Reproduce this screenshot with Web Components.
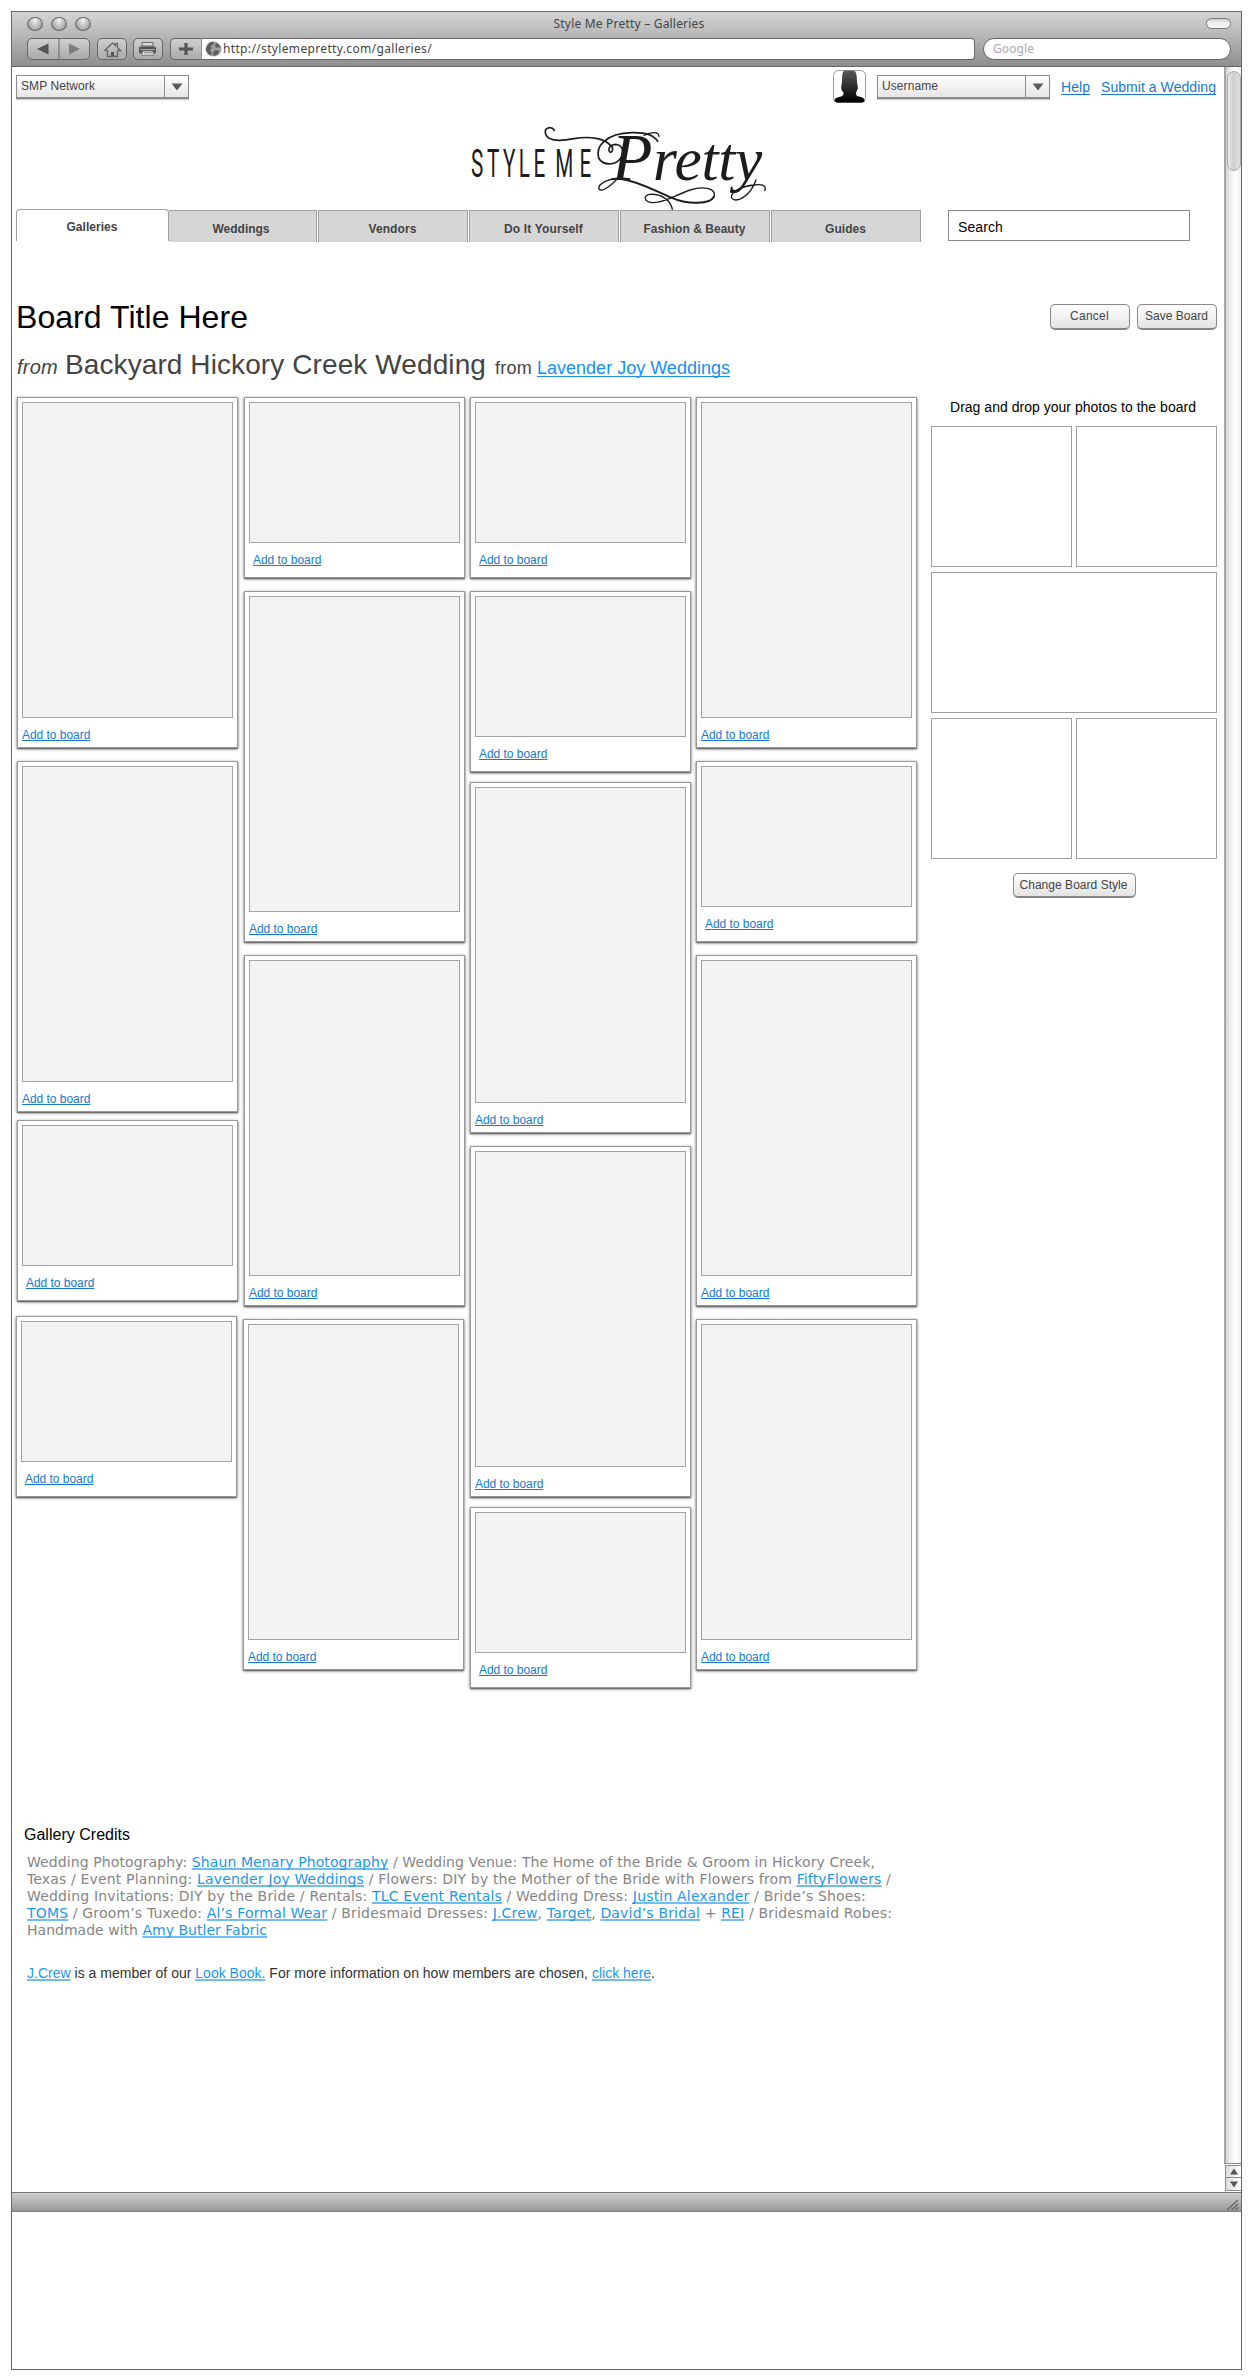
<!DOCTYPE html>
<html lang="en">
<head>
<meta charset="utf-8">
<title>Style Me Pretty – Galleries</title>
<style>
html,body{margin:0;background:#fff}
body{font-family:"Liberation Sans",Arial,sans-serif;padding:11px 0 10px 11px;height:2359px}
</style>
</head>
<body>
<browser-window></browser-window>
<script>
function define(name, html, setup) {
  customElements.define(name, class extends HTMLElement {
    connectedCallback() {
      if (this.shadowRoot) return;
      const root = this.attachShadow({ mode: 'open' });
      root.innerHTML = html;
      if (setup) setup(this, root);
    }
  });
}

// Single line of text spaced to a given width.
define('fit-text', `<style>:host{display:inline-block;white-space:nowrap}</style><slot></slot>`, host => {
  const w = parseFloat(host.getAttribute('w'));
  const n = host.textContent.length;
  const natural = host.getBoundingClientRect().width;
  if (n && natural) host.style.letterSpacing = ((w - natural) / n).toFixed(4) + 'px';
});

define('text-link', `<style>
:host{color:#1679cf}
a{color:inherit;text-decoration:underline;text-underline-offset:var(--offset,1px);text-decoration-skip-ink:none;text-decoration-color:var(--line,currentColor);text-decoration-thickness:var(--thick,1px)}
</style><a><slot></slot></a>`);

define('select-box', `<style>
:host{display:flex;box-sizing:border-box;width:173px;height:24px;border:1px solid #8c8c8c;border-bottom:2px solid #8a8a8a;background:linear-gradient(#fff,#e6e6e6);font-size:12px;line-height:14px;color:#444;box-shadow:0 1px 1px rgba(0,0,0,.2)}
.t{flex:1;padding:3px 0 0 4px}
.a{width:23px;border-left:1px solid #8c8c8c;display:flex;justify-content:center;padding-top:7px;box-sizing:content-box}
svg{display:block}
</style><div class="t"><slot></slot></div><div class="a"><svg width="12" height="8"><path d="M.5.5h11L6 7.500z" fill="#5b5b5b"/></svg></div>`);

define('push-button', `<style>
:host{display:block;box-sizing:border-box;width:80px;height:26px;border:1px solid #8a8a8a;border-bottom:2px solid #858585;border-radius:5px;background:linear-gradient(#fff,#e3e3e3);font-size:12px;line-height:14px;color:#444;text-align:center;padding:4px 1px 0 0}
</style><slot></slot>`);

define('nav-tab', `<style>
:host{display:block;box-sizing:border-box;width:150px;height:32px;margin-top:1px;margin-right:1px;border:1px solid #a0a0a0;border-bottom:0;background:#d6d6d6;font-size:12px;line-height:14px;font-weight:bold;color:#444;text-align:center;padding:11px 1px 0 0}
:host([active]){width:153px;height:32px;margin:0;border-radius:4px 4px 0 0;background:#fff;padding-top:10px;padding-right:1px}
:host([first]){width:148px;border-left:0;padding-right:3px}
</style><slot></slot>`);

define('photo-card', `<style>
:host{display:block;box-sizing:border-box;width:221px;height:351px;border:1px solid #999;background:#fff;padding:4px;box-shadow:0 1px 3px rgba(0,0,0,.55),0 1px 1px rgba(0,0,0,.35);font-size:12px;line-height:14px}
.p{box-sizing:border-box;height:316px;border:1px solid #a3a3a3;background:#f3f3f3}
.l{margin:10px 0 0 0}
:host([short]){height:181px}
:host([short]) .p{height:141px}
:host([short]) .l{margin:10px 0 0 4px}
</style><div class="p"></div><div class="l"><fit-text w="68.3"><text-link>Add to board</text-link></fit-text></div>`);

define('photo-column', `<style>:host{display:block}</style><slot></slot>`, host => {
  // layout: "<kind><gap above>[<]" where "<" nudges the card one pixel left
  for (const item of host.getAttribute('cards').split(' ')) {
    const card = document.createElement('photo-card');
    if (item[0] === 's') card.setAttribute('short', '');
    card.style.marginTop = parseInt(item.slice(1), 10) + 'px';
    if (item.endsWith('<')) card.style.marginLeft = '-1px';
    host.append(card);
  }
});

define('drop-board', `<style>
:host{display:block;width:286px;font-size:14px;line-height:16px;color:#000}
.h{text-align:center;padding:2px 2px 11px 0;}
.g{display:grid;grid-template-columns:141px 141px;column-gap:4px;row-gap:5px}
.g div{box-sizing:border-box;height:141px;border:1px solid #a0a0a0}
.w{grid-column:1/3}
push-button{width:123px;height:25px;margin:14px auto 0}
</style><div class="h"><fit-text w="246">Drag and drop your photos to the board</fit-text></div>
<div class="g"><div></div><div></div><div class="w"></div><div></div><div></div></div>
<push-button><fit-text w="108">Change Board Style</fit-text></push-button>`);

define('brand-logo', `<style>:host{display:block;width:300px;height:88px}svg{display:block;overflow:visible}</style>
<svg width="300" height="88" viewBox="150 366 900 264" fill="none" stroke="#1c1c1c" stroke-linecap="round">
<g transform="scale(.54 1)" font-family="Roboto,sans-serif" font-size="115" fill="#1c1c1c" stroke="none"><text x="284" y="532" textLength="412" lengthAdjust="spacing">STYLE</text><text x="752" y="532" textLength="200" lengthAdjust="spacing">ME</text></g>
<text x="575" y="540" font-family="Liberation Serif,serif" font-style="italic" fill="#1c1c1c" stroke="none" font-size="200">P</text><text x="699" y="540" font-family="Liberation Serif,serif" font-style="italic" fill="#1c1c1c" stroke="none" font-size="184" textLength="328" lengthAdjust="spacing">retty</text>
<path stroke-width="5" d="M403 391C393 377 371 383 377 402C383 428 430 422 462 416C508 408 556 414 575 440"/>
<path stroke-width="5" d="M575 436C580 446 578 456 572 457C563 456 564 434 586 433C608 434 613 455 603 473C588 498 548 497 536 474C526 440 556 400 636 398C668 397 700 402 713 424"/>
<path stroke-width="4" d="M672 406C692 397 716 393 717 409"/>
<path stroke-width="4" d="M604 538C575 531 532 550 537 567C546 580 580 552 606 520"/>
<path stroke-width="6" d="M600 536C660 544 710 576 752 592C806 616 870 612 882 590"/>
<path stroke-width="4" d="M882 590C891 560 842 560 810 570C765 586 733 609 700 608C671 607 668 585 690 583C720 581 752 598 757 628"/>
<path stroke-width="4" d="M1008 540C990 592 945 611 935 594C929 574 970 558 1002 555C1026 551 1041 557 1034 572"/>
</svg>`);

define('user-avatar', `<style>:host{display:block;width:33px;height:33px}svg{display:block}</style>
<svg width="33" height="33" viewBox="0 0 33 33"><defs><linearGradient id="g" x1="0" y1="0" x2="0" y2="1"><stop offset="0" stop-color="#5a5a5a"/><stop offset=".75" stop-color="#151515"/><stop offset="1"/></linearGradient></defs>
<rect x=".5" y=".5" width="32" height="32" rx="5" fill="#fff" stroke="#999"/>
<path d="M10.500 1.200C13 .3 20 .3 22 1.200C24.500 4 23.500 11 24.500 15C25.500 18 24.500 20 23 22.500C22.500 26 25 26.500 28 27C31 27.800 32 30 31.500 31.500L29.500 32.500H4L1.500 31.500C1 29.500 2.500 27.800 5 27.200C8.500 26.500 11 26 10.500 22.500C8.500 20.500 7.500 18 8.500 15C9.500 11 8.500 4 10.500 1.200Z" fill="url(#g)"/></svg>`);

define('browser-chrome', `<style>
:host{display:block;box-sizing:border-box;height:55px;border-bottom:1px solid #666;background:linear-gradient(#d5d5d5,#8f8f8f);font-family:"Noto Sans","Open Sans",sans-serif;font-size:12px;color:#444}
.top{display:flex;height:26px;padding:0 10px 0 15px;box-sizing:border-box;justify-content:space-between}
.lights{display:flex;gap:8px;padding-top:5px;width:200px;box-sizing:border-box}
.lights i{box-sizing:border-box;width:16px;height:14px;border:1px solid #686868;border-radius:50%;background:radial-gradient(ellipse at 50% 15%,#f3f3f3 0,#c8c8c8 42%,#858585 100%)}
.title{line-height:16px;padding-top:4px}
.pillbox{width:200px;display:flex;justify-content:flex-end;padding-top:6px;box-sizing:border-box}
.pill{box-sizing:border-box;width:25px;height:11px;border:1px solid #777;border-radius:6px;background:linear-gradient(#ccc,#eee 40%,#f5f5f5)}
.bar{display:flex;height:22px;padding-left:15px}
.b{box-sizing:border-box;height:22px;border:1px solid #666;border-radius:5px;background:linear-gradient(#cfcfcf,#aaa);display:flex}
.b svg{display:block;width:100%;height:20px}
.f{box-sizing:border-box;height:22px;border:1px solid #666;background:#fff;line-height:20px}
.url{display:flex;width:774px;border-left:1px solid #8a8a8a;border-radius:0 4px 4px 0;}
.url svg{margin:2px 1px 0 3px;display:block}
.goog{margin-left:8px;width:248px;border-radius:11px;padding-left:9px;color:#aaa}
</style>
<div class="top"><div class="lights"><i></i><i></i><i></i></div><div class="title"><fit-text w="151">Style Me Pretty – Galleries</fit-text></div><div class="pillbox"><div class="pill"></div></div></div>
<div class="bar">
<div class="b" style="width:63px"><svg viewBox="0 0 61 20"><path d="M31 0V20" stroke="#666"/><path d="M9 10L20.500 4.500V15.500Z" fill="#555"/><path d="M52 10L41 4.500V15.500Z" fill="#7c7c7c"/></svg></div>
<div class="b" style="width:30px;margin-left:7px"><svg viewBox="0 0 28 20" fill="none" stroke="#666" stroke-width="1.300"><path d="M9.500 11.500V17.500H19.500V11.500M6.500 11.500L14.500 4L17.500 6.800V4.500H19.500V8.500L22.500 11.500H19.500M6.500 11.500H9.500"/><path d="M13 13h3v4h-3z" fill="#555" stroke="none"/></svg></div>
<div class="b" style="width:30px;margin-left:6px"><svg viewBox="0 0 28 20"><path d="M8 3.500H19V7H8Z" fill="#ddd" stroke="#666"/><rect x="5" y="7.500" width="17" height="7" rx="1.500" fill="#555"/><path d="M6 10.500H21" stroke="#aaa"/><path d="M9 12H18.500L20 16.500H7.500Z" fill="#e5e5e5" stroke="#777" stroke-width=".8"/><path d="M10 13.500H18M9.500 15H18.500" stroke="#888" stroke-width=".7"/></svg></div>
<div class="b" style="width:31px;margin-left:7px;border-radius:5px 0 0 5px;border-right:0"><svg viewBox="0 0 30 20"><path d="M15 4V16M8 10H22" stroke="#555" stroke-width="3.200"/></svg></div>
<div class="f url"><svg width="17" height="16" viewBox="0 0 17 16"><ellipse cx="8.500" cy="8" rx="8" ry="7.500" fill="#a0a0a0"/><path d="M2 5Q5 0 9 1L8 4L5 5L7 7L5 9L7 12L6 14Q1 12 1 8ZM11 2Q15 4 15.500 7L13 6L11 7L10 5ZM10 9L14 10L13 13L9 15L8 12Z" fill="#5d5d5d"/></svg><fit-text w="209">http://stylemepretty.com/galleries/</fit-text></div>
<div class="f goog"><fit-text w="41">Google</fit-text></div>
</div>`);

define('scroll-bar', `<style>
:host{display:flex;flex-direction:column;width:17px;height:2125px}
.t{box-sizing:border-box;height:2097px;border-left:2px solid #a6a6a6;border-bottom:1px solid #888;background:linear-gradient(90deg,#d3d3d3,#f3f3f3 35%,#fff 65%,#eee);padding:4px 0 0 1px}
.h{box-sizing:border-box;width:14px;height:100px;border:1px solid #aaa;border-radius:7px;background:linear-gradient(90deg,#eee,#cfcfcf 40%,#dedede)}
.a{box-sizing:border-box;height:13px;border:1px solid #8b8b8b;border-right:0;margin-left:1px;background:linear-gradient(90deg,#ddd,#fff);display:flex;justify-content:center;align-items:center}
</style><div class="t"><div class="h"></div></div><div class="a" style="margin-top:1px"><svg width="8" height="7"><path d="M0 6.500H8L4 .5Z" fill="#555"/></svg></div><div class="a" style="border-top:0"><svg width="8" height="7"><path d="M0 .5H8L4 6.500Z" fill="#555"/></svg></div>`);

define('gallery-credits', `<style>
:host{display:block;color:#000}
h2{font:16px/18px "Liberation Sans",sans-serif;margin:0 0 10px 12px}
.c{font-family:"DejaVu Sans",Verdana,sans-serif;font-size:14px;line-height:17px;color:#858585;margin-left:15px}
.c fit-text,.m fit-text{display:block;width:max-content}
text-link{color:#1c97ea;--line:#70bdf3;--thick:2px;--offset:1px}
.m{margin:26px 0 0 15px;font-size:14px;line-height:16px;color:#333}
</style>
<h2><fit-text w="106">Gallery Credits</fit-text></h2>
<div class="c">
<fit-text w="848">Wedding Photography: <text-link>Shaun Menary Photography</text-link> / Wedding Venue: The Home of the Bride &amp; Groom in Hickory Creek,</fit-text>
<fit-text w="864">Texas / Event Planning: <text-link>Lavender Joy Weddings</text-link> / Flowers: DIY by the Mother of the Bride with Flowers from <text-link>FiftyFlowers</text-link> /</fit-text>
<fit-text w="839">Wedding Invitations: DIY by the Bride / Rentals: <text-link>TLC Event Rentals</text-link> / Wedding Dress: <text-link>Justin Alexander</text-link> / Bride’s Shoes:</fit-text>
<fit-text w="865"><text-link>TOMS</text-link> / Groom’s Tuxedo: <text-link>Al’s Formal Wear</text-link> / Bridesmaid Dresses: <text-link>J.Crew</text-link>, <text-link>Target</text-link>, <text-link>David’s Bridal</text-link> + <text-link>REI</text-link> / Bridesmaid Robes:</fit-text>
<fit-text w="240">Handmade with <text-link>Amy Butler Fabric</text-link></fit-text>
</div>
<div class="m"><fit-text w="628"><text-link>J.Crew</text-link> is a member of our <text-link>Look Book.</text-link> For more information on how members are chosen, <text-link>click here</text-link>.</fit-text></div>`);

define('gallery-page', `<style>
:host{display:block;width:1212px}
.row{display:flex;align-items:flex-start}
.util{height:55px;font-size:14px;line-height:16px}
.util text-link{--offset:2px}
.logo{height:87px;padding-left:458px}
.tabs{height:33px;padding-left:4px}
.search{box-sizing:border-box;width:242px;height:31px;border:1px solid #888;margin:1px 0 0 26px;padding:8px 0 0 9px;font-size:14px;line-height:16px;color:#000}
.title{height:49px;padding:57px 7px 0 4px}
h1{font-size:32px;line-height:36px;font-weight:normal;margin:0;flex:1;color:#000}
.title push-button{margin:5px 0 0 7px}
.sub{height:48px;margin-top:1px;padding-left:5px;font-size:28px;line-height:32px;color:#444;align-items:baseline}
.sub text-link{color:#1591f0;--offset:2px}
.main{height:1429px;padding-left:5px}
</style>
<div class="row util">
<select-box style="margin:8px 0 0 4px"><fit-text w="74">SMP Network</fit-text></select-box>
<user-avatar style="margin:3px 0 0 644px"></user-avatar>
<select-box style="margin:8px 0 0 11px"><fit-text w="56">Username</fit-text></select-box>
<fit-text w="29" style="margin:12px 0 0 11px"><text-link>Help</text-link></fit-text>
<fit-text w="115" style="margin:12px 0 0 11px"><text-link>Submit a Wedding</text-link></fit-text>
</div>
<div class="row logo"><brand-logo></brand-logo></div>
<div class="row tabs">
<nav-tab active><fit-text w="51">Galleries</fit-text></nav-tab><nav-tab first><fit-text w="57">Weddings</fit-text></nav-tab><nav-tab><fit-text w="48">Vendors</fit-text></nav-tab><nav-tab><fit-text w="79">Do It Yourself</fit-text></nav-tab><nav-tab><fit-text w="102">Fashion &amp; Beauty</fit-text></nav-tab><nav-tab><fit-text w="41">Guides</fit-text></nav-tab>
<div class="search"><fit-text w="45">Search</fit-text></div>
</div>
<div class="row title"><h1><fit-text w="232">Board Title Here</fit-text></h1><push-button><fit-text w="39">Cancel</fit-text></push-button><push-button><fit-text w="63">Save Board</fit-text></push-button></div>
<div class="row sub"><fit-text w="41" style="font-size:20px;font-style:italic">from</fit-text><fit-text w="421" style="margin-left:7px">Backyard Hickory Creek Wedding</fit-text><fit-text w="37" style="font-size:18px;margin-left:9px">from</fit-text><fit-text w="193" style="font-size:18px;margin-left:5px"><text-link>Lavender Joy Weddings</text-link></fit-text></div>
<div class="row main">
<photo-column cards="t0 t13 s8 s15<"></photo-column>
<photo-column cards="s0 t13 t13 t13<" style="margin-left:6px"></photo-column>
<photo-column cards="s0 s13 t10 t13 s10" style="margin-left:5px"></photo-column>
<photo-column cards="t0 s13 t13 t13" style="margin-left:5px"></photo-column>
<drop-board style="margin-left:14px"></drop-board>
</div>
<gallery-credits></gallery-credits>`);

define('browser-window', `<style>
:host{display:block;box-sizing:border-box;width:1231px;height:2359px;border:1px solid #666;background:#fff}
.v{display:flex;height:2125px}
.s{box-sizing:border-box;height:20px;border-top:1px solid #777;border-bottom:1px solid #808080;background:linear-gradient(#cfcfcf,#979797);display:flex;justify-content:flex-end;align-items:flex-end}
</style><browser-chrome></browser-chrome><div class="v"><gallery-page></gallery-page><scroll-bar></scroll-bar></div>
<div class="s"><svg width="15" height="12"><path d="M1 11L12 1M5.500 11L12 5M9.500 11L12 8.500" stroke="#666" stroke-width="1.200"/></svg></div>`);
</script>
</body>
</html>
